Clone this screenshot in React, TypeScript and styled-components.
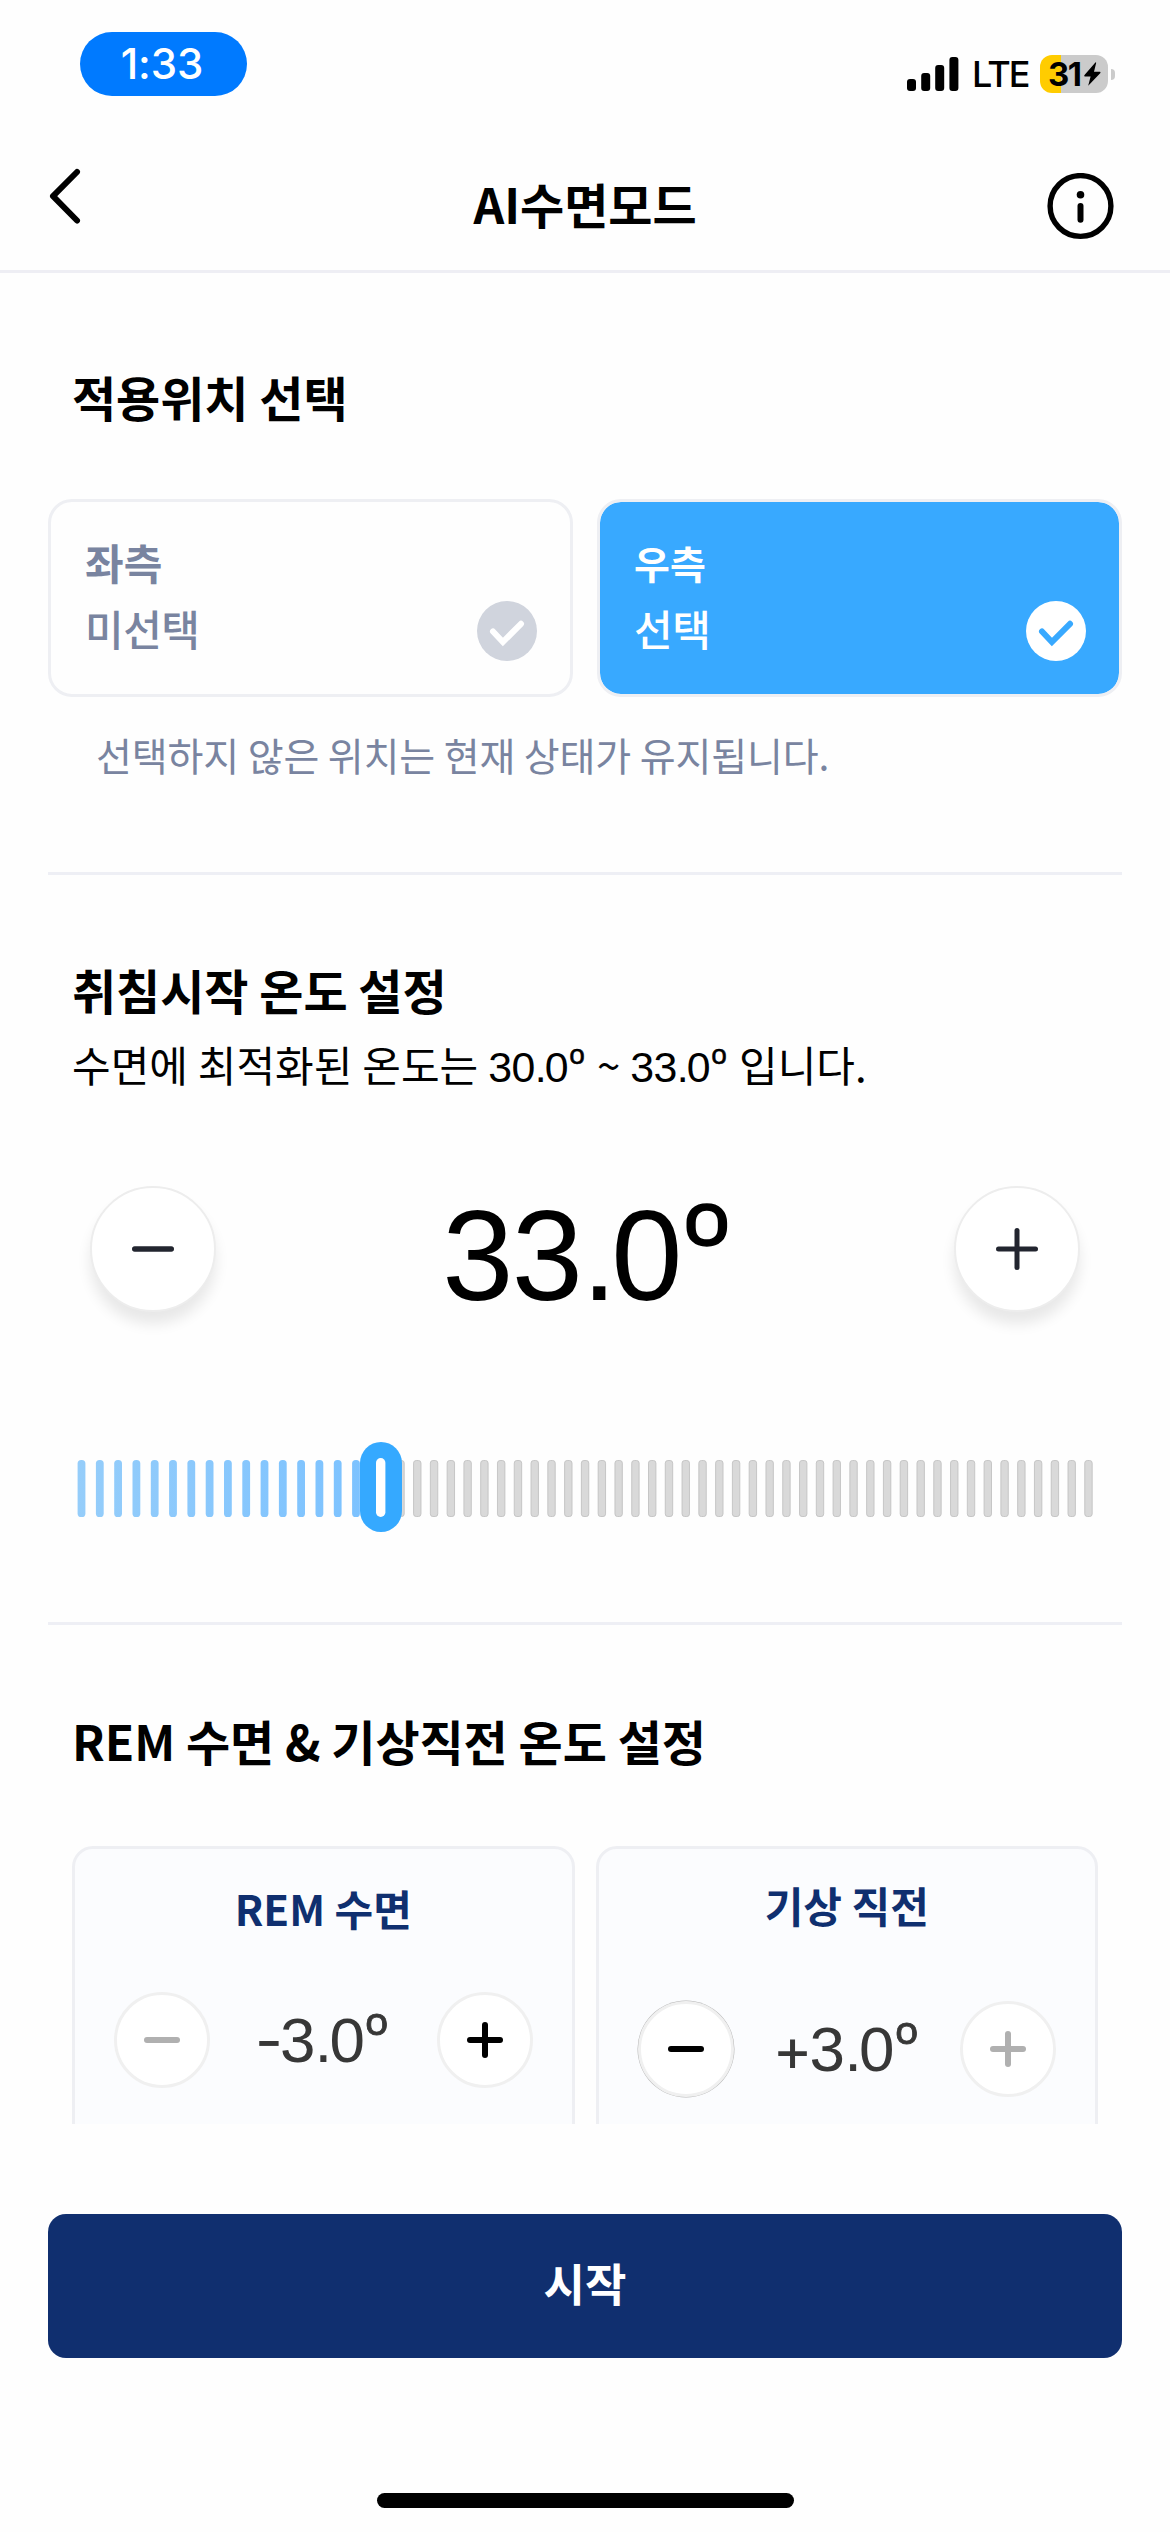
import React from "react";
import styled, { createGlobalStyle, css } from "styled-components";

const KR = `"Noto Sans CJK KR", "Noto Sans", sans-serif`;
const NUM = `Inter, "Noto Sans CJK KR", sans-serif`;
const DIGIT = `"Liberation Sans", "Noto Sans CJK KR", sans-serif`;

const Global = createGlobalStyle`
  * { box-sizing: border-box; }
  body { margin: 0; background: #fefefe; font-family: ${KR}; color: #000; }
  button { font: inherit; color: inherit; border: 0; padding: 0; margin: 0; background: none; }
  h1, h2, h3, p { margin: 0; }
`;

const Screen = styled.div`
  width: 1170px;
  height: 2532px;
  display: flex;
  flex-direction: column;
  background: #fefefe;
  overflow: hidden;
`;

const StatusBar = styled.div`
  height: 141px;
  padding: 32px 55px 0 80px;
  display: flex;
  justify-content: space-between;
  align-items: flex-start;
`;

const TimePill = styled.div`
  width: 167px;
  height: 64px;
  border-radius: 32px;
  background: #007aff;
  color: #fff;
  font: 500 42px/64px ${NUM};
  text-align: center;
  letter-spacing: -0.1px;
  padding-right: 3px;
`;

const StatusRight = styled.div`
  display: flex;
  align-items: center;
  padding-top: 23px;
`;

const Carrier = styled.span`
  font: 500 36px/38px ${NUM};
  letter-spacing: -1.8px;
  width: 67px;
  padding-left: 13px;
  margin-right: 14px;
  white-space: nowrap;
`;

const Battery = styled.div`
  width: 68px;
  height: 38px;
  border-radius: 12px;
  background: linear-gradient(90deg, #ffcc00 21px, #cbcbcb 21px);
  display: flex;
  align-items: center;
  padding-left: 8px;
  gap: 3px;
  font: 700 33px/38px ${NUM};
  letter-spacing: -1.5px;
`;

const BatteryCap = styled.span`
  width: 4px;
  height: 11px;
  margin-left: 3px;
  border-radius: 0 5px 5px 0;
  background: #cbcbcb;
`;

const Header = styled.header`
  height: 132px;
  border-bottom: 3px solid #eeeef4;
  display: grid;
  grid-template-columns: 80px 1fr 80px;
  padding: 0 47px;
`;

const Title = styled.h1`
  padding-top: 26px;
  font-size: 48px;
  line-height: 72px;
  font-weight: 700;
  text-align: center;
`;

const HeaderButton = styled.button<{ $top: number; $end?: boolean }>`
  display: flex;
  align-items: flex-start;
  justify-content: ${(p) => (p.$end ? "flex-end" : "flex-start")};
  padding-top: ${(p) => p.$top}px;
  ${(p) => p.$end && css`padding-right: 9px;`}
`;

const Content = styled.main`
  height: 1851px;
  overflow: hidden;
  padding: 0 48px;
`;

const Section = styled.section<{ $top: number; $bottom?: number; $line?: boolean }>`
  padding: ${(p) => p.$top}px 0 ${(p) => p.$bottom ?? 0}px;
  ${(p) => p.$line && css`border-bottom: 3px solid #eeeff5;`}
`;

const Heading = styled.h2`
  padding-left: 24px;
  font-size: 48px;
  line-height: 72px;
  font-weight: 700;
  letter-spacing: -0.05px;
`;

const Sides = styled.div`
  display: grid;
  grid-template-columns: 1fr 1fr;
  gap: 24px;
  margin-top: 67px;
`;

const SideCard = styled.button<{ $on?: boolean }>`
  height: 198px;
  border: 3px solid #eeeff3;
  border-radius: 24px;
  background: ${(p) => (p.$on ? "#38a9ff" : "#fefefe")};
  background-clip: padding-box;
  color: ${(p) => (p.$on ? "#fff" : "#7984a0")};
  padding: 27px 33px 33px 34px;
  display: flex;
  justify-content: space-between;
  align-items: flex-end;
  text-align: left;
`;

const SideText = styled.div`
  align-self: flex-start;
  display: flex;
  flex-direction: column;
`;

const SideName = styled.span<{ $size: number }>`
  font-size: ${(p) => p.$size}px;
  line-height: 66px;
  font-weight: 700;
`;

const SideState = styled.span`
  font-size: 42px;
  line-height: 66px;
  font-weight: 500;
  letter-spacing: -0.5px;
`;

const Note = styled.p`
  margin-top: 27px;
  padding-left: 48px;
  font-size: 39px;
  line-height: 60px;
  letter-spacing: -0.12px;
  color: #7984a0;
`;

const Guide = styled.p`
  margin-top: 9px;
  padding-left: 24px;
  font-size: 42px;
  line-height: 60px;
  word-spacing: 0.5px;
`;

const Digits = styled.span`
  font-family: ${DIGIT};
  font-size: 1.02em;
  line-height: 0;
  letter-spacing: -0.012em;
`;

const SignMark = styled.span`
  font-family: ${NUM};
  font-size: 0.97em;
  line-height: 0;
  letter-spacing: -0.05em;
`;

const Point = styled.span`
  letter-spacing: -0.045em;
`;

const Ordinal = styled.span`
  display: inline-block;
  font-family: ${NUM};
  font-size: 0.86em;
  font-weight: 300;
  line-height: 0;
  margin: 0 0.08em 0 0.02em;
  -webkit-text-stroke: 0.014em currentColor;
  transform: translateY(-0.15em) scaleX(1.08);
`;

const DialRow = styled.div`
  height: 126px;
  margin-top: 92px;
  padding: 0 42px;
  display: flex;
  justify-content: space-between;
  align-items: center;
`;

const DialButton = styled.button`
  width: 126px;
  height: 126px;
  border-radius: 50%;
  border: 2px solid #ededed;
  background: #fff;
  box-shadow: 0 12px 14px rgba(0, 0, 0, 0.09);
  display: flex;
  align-items: center;
  justify-content: center;
`;

const DialValue = styled.div`
  font: 400 125.5px/126px ${DIGIT};
  padding: 15px 0 0 10px;
`;

const Slider = styled.div`
  margin: 130px 0 0;
  height: 90px;
  display: flex;
  padding-left: 29px;
`;

const Cards = styled.div`
  display: grid;
  grid-template-columns: 1fr 1fr;
  gap: 21px;
  margin: 70px 24px 0;
`;

const TempCard = styled.div<{ $top: number }>`
  height: 420px;
  border: 3px solid #eeeff3;
  border-radius: 21px;
  background: #fbfcfe;
  padding: ${(p) => p.$top}px 39px 0;
`;

const TempName = styled.h3`
  font-size: 42px;
  line-height: 60px;
  font-weight: 700;
  text-align: center;
  color: #0f2f6f;
`;

const TempRow = styled.div<{ $top: number }>`
  margin-top: ${(p) => p.$top}px;
  display: flex;
  justify-content: space-between;
  align-items: center;
`;

const RoundButton = styled.button<{ $ring?: boolean }>`
  width: 96px;
  height: 96px;
  border-radius: 50%;
  border: 3px solid #f0f0f0;
  background: #fff;
  display: flex;
  align-items: center;
  justify-content: center;
  ${(p) => p.$ring && css`box-shadow: 0 0 0 0.5px #b4b4b4;`}
`;

const TempValue = styled.span`
  font: 400 62.5px/95px ${DIGIT};
  padding-left: 1px;
  color: #373737;
`;

const Footer = styled.footer`
  flex: 1;
  padding: 90px 48px 0;
  display: flex;
  flex-direction: column;
  align-items: center;
`;

const StartButton = styled.button`
  width: 100%;
  height: 144px;
  padding-bottom: 6px;
  border-radius: 18px;
  background: #102f6f;
  color: #fff;
  font-size: 45px;
  line-height: 60px;
  font-weight: 700;
`;

const HomeIndicator = styled.div`
  width: 417px;
  height: 15px;
  border-radius: 8px;
  margin-top: 135px;
  background: #000;
`;

const Temperature = ({ value }: { value: string }) => {
  const [, sign, whole, tenth] = value.match(/^([+-]?)(\d+)\.(\d)$/)!;
  return (
    <>
      {sign && <SignMark>{sign}</SignMark>}
      <Digits>
        {whole}
        <Point>.</Point>
        {tenth}
        <Ordinal>º</Ordinal>
      </Digits>
    </>
  );
};

const Sign = ({ size, w, color, plus }: { size: number; w: number; color: string; plus?: boolean }) => (
  <svg width={size} height={size} viewBox={`0 0 ${size} ${size}`} stroke={color} strokeWidth={w} strokeLinecap="round">
    <path d={`M${w / 2} ${size / 2}H${size - w / 2}`} />
    {plus && <path d={`M${size / 2} ${w / 2}V${size - w / 2}`} />}
  </svg>
);

const Check = ({ bg, fg }: { bg: string; fg: string }) => (
  <svg width="60" height="60" viewBox="0 0 60 60" fill="none">
    <circle cx="30" cy="30" r="30" fill={bg} />
    <path d="M16 30.5L25.9 41L44 22.8" stroke={fg} strokeWidth="6" strokeLinecap="round" strokeLinejoin="miter" />
  </svg>
);

const Ticks = () => (
  <svg width="1020" height="90" viewBox="77 0 1020 90">
    <defs>
      <linearGradient id="warm" gradientUnits="userSpaceOnUse" x1="77" x2="364" y1="0" y2="0">
        <stop offset="0" stopColor="#95cdfa" />
        <stop offset="1" stopColor="#7cc2ff" />
      </linearGradient>
    </defs>
    {Array.from({ length: 42 }, (_, i) => (
      <rect key={i} x={396.8 + i * 16.78} y="18.5" width="7.4" height="56" rx="2.6" fill="#d9d9d9" stroke="#c2c2c2" strokeWidth="0.9" />
    ))}
    {Array.from({ length: 16 }, (_, i) => (
      <rect key={i} x={77.6 + i * 18.3} y="18" width="7.8" height="57" rx="3.6" fill="url(#warm)" />
    ))}
    <rect x="360" y="0" width="42" height="90" rx="21" fill="#35a9ff" />
    <rect x="376" y="16" width="9.4" height="59" rx="4.7" fill="#fff" />
  </svg>
);

export default function App() {
  return (
    <>
      <Global />
      <Screen>
        <StatusBar>
          <TimePill>1:33</TimePill>
          <StatusRight>
            <svg width="52" height="38" viewBox="0 0 52 38">
              <rect x="0" y="24" width="9" height="12" rx="3" />
              <rect x="14.2" y="18" width="9" height="18" rx="3" />
              <rect x="28.2" y="10" width="9" height="26" rx="3" />
              <rect x="42.4" y="2" width="9" height="34" rx="3" />
            </svg>
            <Carrier>LTE</Carrier>
            <Battery>
              31
              <svg width="17" height="24" viewBox="0 0 17 24">
                <path d="M11.6 0.2L0.3 13.2Q0 14.4 1 14.4H6.6L4.2 23.8L16.4 11Q16.8 9.8 15.8 9.8H10L12.2 0.8Z" />
              </svg>
            </Battery>
            <BatteryCap />
          </StatusRight>
        </StatusBar>
        <Header>
          <HeaderButton $top={26}>
            <svg width="36" height="58" viewBox="0 0 36 58" fill="none" stroke="#000" strokeWidth="6" strokeLinecap="round" strokeLinejoin="round">
              <path d="M30 5L6 29.2L30 53.5" />
            </svg>
          </HeaderButton>
          <Title>AI수면모드</Title>
          <HeaderButton $top={32} $end>
            <svg width="67" height="67" viewBox="0 0 67 67" fill="none">
              <circle cx="33.5" cy="33" r="30.4" stroke="#000" strokeWidth="5.4" />
              <circle cx="33.5" cy="21.8" r="3.8" fill="#000" />
              <path d="M33.5 33V46.7" stroke="#000" strokeWidth="6" strokeLinecap="round" />
            </svg>
          </HeaderButton>
        </Header>
        <Content>
          <Section $top={87} $bottom={88} $line>
            <Heading>적용위치 선택</Heading>
            <Sides>
              <SideCard>
                <SideText>
                  <SideName $size={42}>좌측</SideName>
                  <SideState>미선택</SideState>
                </SideText>
                <Check bg="#d0d4dd" fg="#fff" />
              </SideCard>
              <SideCard $on>
                <SideText>
                  <SideName $size={39}>우측</SideName>
                  <SideState>선택</SideState>
                </SideText>
                <Check bg="#fff" fg="#38a9ff" />
              </SideCard>
            </Sides>
            <Note>선택하지 않은 위치는 현재 상태가 유지됩니다.</Note>
          </Section>
          <Section $top={78} $bottom={90} $line>
            <Heading>취침시작 온도 설정</Heading>
            <Guide>
              수면에 최적화된 온도는 <Temperature value="30.0" /> ~ <Temperature value="33.0" /> 입니다.
            </Guide>
            <DialRow>
              <DialButton>
                <Sign size={42} w={5.4} color="#22252f" />
              </DialButton>
              <DialValue>
                <Temperature value="33.0" />
              </DialValue>
              <DialButton>
                <Sign size={42} w={5} color="#22252f" plus />
              </DialButton>
            </DialRow>
            <Slider>
              <Ticks />
            </Slider>
          </Section>
          <Section $top={79}>
            <Heading>REM 수면 &amp; 기상직전 온도 설정</Heading>
            <Cards>
              <TempCard $top={29}>
                <TempName>REM 수면</TempName>
                <TempRow $top={54}>
                  <RoundButton>
                    <Sign size={36} w={6} color="#b0b0b0" />
                  </RoundButton>
                  <TempValue>
                    <Temperature value="-3.0" />
                  </TempValue>
                  <RoundButton>
                    <Sign size={36} w={6} color="#000" plus />
                  </RoundButton>
                </TempRow>
              </TempCard>
              <TempCard $top={26}>
                <TempName>기상 직전</TempName>
                <TempRow $top={66}>
                  <RoundButton $ring>
                    <Sign size={36} w={6} color="#000" />
                  </RoundButton>
                  <TempValue>
                    <Temperature value="+3.0" />
                  </TempValue>
                  <RoundButton>
                    <Sign size={36} w={6} color="#b0b0b0" plus />
                  </RoundButton>
                </TempRow>
              </TempCard>
            </Cards>
          </Section>
        </Content>
        <Footer>
          <StartButton>시작</StartButton>
          <HomeIndicator />
        </Footer>
      </Screen>
    </>
  );
}
